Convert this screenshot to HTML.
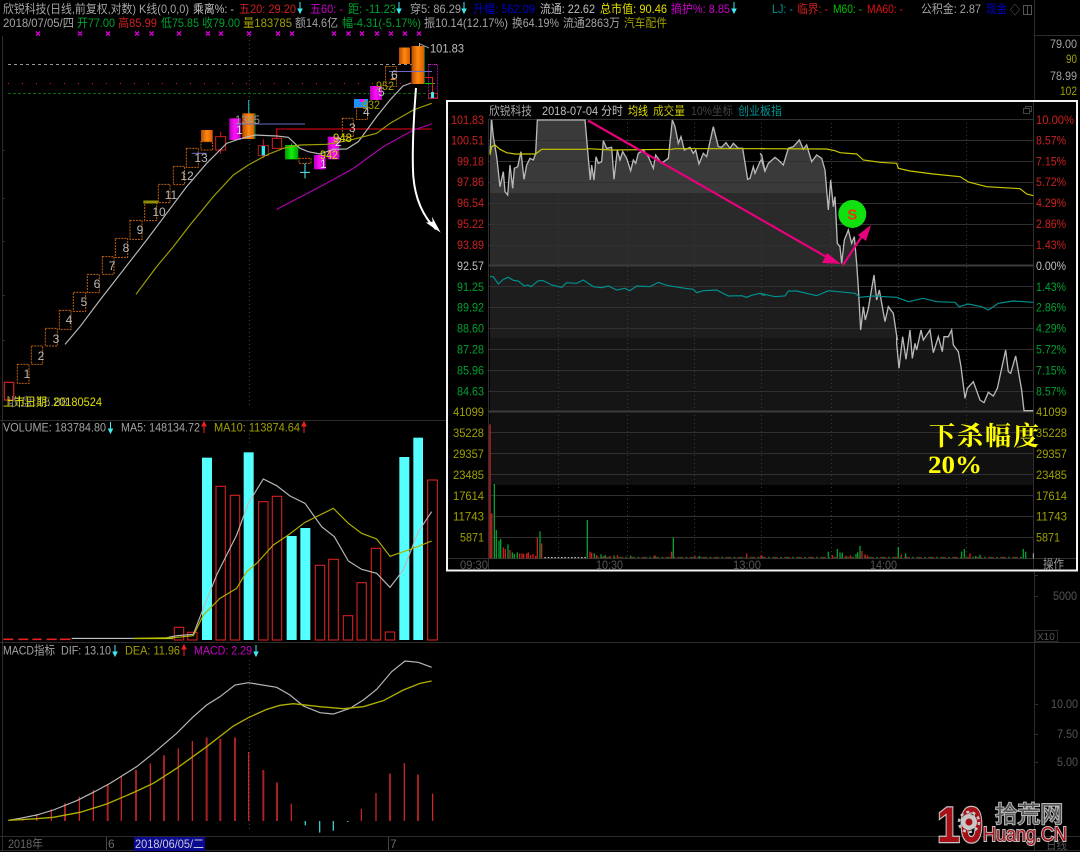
<!DOCTYPE html>
<html lang="zh"><head><meta charset="utf-8"><title>欣锐科技</title>
<style>
html,body{margin:0;padding:0;background:#000;width:1080px;height:852px;overflow:hidden}
svg{display:block;filter:blur(.35px)}
text{font-family:"Liberation Sans","Noto Sans CJK SC",sans-serif;font-size:12px}
.g{fill:#a4a4a4}.w{fill:#c0c0c0}.r{fill:#cc2020}.n{fill:#00a030}.y{fill:#a0a000}.Y{fill:#e0e000}.m{fill:#c800c8}.b{fill:#0000c8}.t{fill:#009494}.d{fill:#555}
.l{fill:none}
</style></head><body>
<svg width="1080" height="852" viewBox="0 0 1080 852" xmlns="http://www.w3.org/2000/svg">
<defs>
<linearGradient id="og"><stop offset="0" stop-color="#b84a00"/><stop offset=".5" stop-color="#ff8a10"/><stop offset="1" stop-color="#d85a00"/></linearGradient>
<linearGradient id="mg"><stop offset="0" stop-color="#b800b8"/><stop offset=".5" stop-color="#ff10ff"/><stop offset="1" stop-color="#c000c0"/></linearGradient>
<linearGradient id="gg"><stop offset="0" stop-color="#009a00"/><stop offset=".5" stop-color="#10f010"/><stop offset="1" stop-color="#00a000"/></linearGradient>
<path id="dn" d="M0 0V10M-2 7L0 11L2 7Z" stroke="#40e8f0" fill="#40e8f0"/>
<path id="up" d="M0 11V1M-2 4L0 0L2 4Z" stroke="#f02020" fill="#f02020"/>
<clipPath id="pc">
<polygon transform="translate(445,100) scale(.33333)" points="135,1155 135,60 140,60 145,110 155,170 165,260 175,215 180,275 188,285 195,195 203,265 208,205 218,200 228,155 237,238 245,195 255,175 265,180 272,160 277,60 420,60 430,175 436,240 440,195 447,240 453,170 460,190 470,185 475,122 485,145 500,142 507,238 517,150 525,180 533,155 545,175 557,212 565,180 572,190 580,160 595,150 610,170 625,205 632,165 650,190 670,175 682,60 690,80 700,130 708,110 718,150 735,142 745,160 752,150 762,192 775,160 785,170 805,80 820,140 830,142 843,128 855,145 865,130 880,145 893,145 908,238 915,235 925,200 930,220 945,185 950,180 960,215 960,1155"/>
<polygon transform="translate(760,100) scale(.33333)" points="0,1155 0,160 5,165 15,213 25,190 45,172 55,180 70,195 85,145 100,140 118,120 130,148 140,135 155,185 170,165 185,175 195,210 205,330 212,240 220,320 225,290 232,430 240,440 245,490 253,420 265,390 275,430 283,410 290,490 296,580 302,690 310,620 316,660 325,625 342,525 350,600 358,570 375,665 385,620 400,640 412,720 412,1155"/>
<polygon transform="translate(760,330) scale(.33333)" points="410,465 410,40 417,115 428,20 438,88 450,0 457,85 465,40 470,60 483,0 490,30 510,0 520,68 535,20 547,65 552,20 565,20 575,0 580,45 595,65 603,110 615,205 622,175 640,155 660,210 672,218 685,187 700,198 712,175 737,60 745,125 752,130 767,78 785,180 792,242 820,242 820,465"/>
</clipPath>
</defs>
<rect width="1080" height="852" fill="#000"/>

<!-- frame lines -->
<g stroke="#2c2c2c" fill="none">
<path d="M2.5 36V850M0 420.5H1034M0 642.5H1080M0 836.5H1080M0 850.5H1080M1034.5 0V850M1034 35.5H1080"/>
<path d="M1034 575.5H1038M1034 596.5H1038M1034 704.5H1038M1034 734.5H1038M1034 762.5H1038M2 150.5H5M2 198.5H5M2 241.5H5M2 295.5H5M2 340.5H5"/>
<rect x="1035.5" y="630.5" width="22" height="11"/>
</g>
<path d="M249.5 36V405M249.5 430V445M249.5 660V830" stroke="#444" stroke-dasharray="1 3" fill="none"/>

<!-- header line 1 -->
<text class="g" x="3" y="13" textLength="133" lengthAdjust="spacingAndGlyphs">欣锐科技(日线,前复权,对数)</text>
<text class="g" x="139" y="13" textLength="50" lengthAdjust="spacingAndGlyphs">K线(0,0,0)</text>
<text class="w" x="193" y="13" textLength="41" lengthAdjust="spacingAndGlyphs">乘离%: -</text>
<text class="r" x="239" y="13" textLength="57" lengthAdjust="spacingAndGlyphs">五20: 29.20</text>
<text class="m" x="310" y="13" textLength="33" lengthAdjust="spacingAndGlyphs">五60: -</text>
<text class="n" x="348" y="13" textLength="48" lengthAdjust="spacingAndGlyphs">距: -11.23</text>
<text class="g" x="410" y="13" textLength="51" lengthAdjust="spacingAndGlyphs">穿5: 86.29</text>
<text class="b" x="473" y="13" textLength="62" lengthAdjust="spacingAndGlyphs">升幅: 562.09</text>
<text class="w" x="540" y="13" textLength="55" lengthAdjust="spacingAndGlyphs">流通: 22.62</text>
<text class="Y" x="600" y="13" textLength="67" lengthAdjust="spacingAndGlyphs">总市值: 90.46</text>
<text class="m" x="671" y="13" textLength="59" lengthAdjust="spacingAndGlyphs">摘护%: 8.85</text>
<text class="t" x="772" y="13" textLength="21" lengthAdjust="spacingAndGlyphs">LJ: -</text>
<text class="r" x="797" y="13" textLength="31" lengthAdjust="spacingAndGlyphs">临界: -</text>
<text x="833" y="13" fill="#00c000" textLength="29" lengthAdjust="spacingAndGlyphs">M60: -</text>
<text x="867" y="13" fill="#e01010" textLength="36" lengthAdjust="spacingAndGlyphs">MA60: -</text>
<text class="g" x="921" y="13" textLength="60" lengthAdjust="spacingAndGlyphs">公积金: 2.87</text>
<text class="b" x="986" y="13" textLength="21" lengthAdjust="spacingAndGlyphs">现金</text>
<text x="1010" y="14" fill="#666" textLength="10" lengthAdjust="spacingAndGlyphs">◇</text>
<rect x="1023.5" y="5.5" width="8" height="9" fill="none" stroke="#555"/><path d="M1027.5 5V15" stroke="#555"/>
<use href="#dn" x="300" y="2"/><use href="#dn" x="399" y="2"/><use href="#dn" x="464" y="2"/><use href="#dn" x="734" y="2"/>

<!-- header line 2 -->
<text class="g" x="3" y="27" textLength="71" lengthAdjust="spacingAndGlyphs">2018/07/05/四</text>
<text class="n" x="77" y="27" textLength="38" lengthAdjust="spacingAndGlyphs">开77.00</text>
<text class="r" x="118" y="27" textLength="39" lengthAdjust="spacingAndGlyphs">高85.99</text>
<text class="n" x="161" y="27" textLength="38" lengthAdjust="spacingAndGlyphs">低75.85</text>
<text class="n" x="202" y="27" textLength="38" lengthAdjust="spacingAndGlyphs">收79.00</text>
<text class="y" x="243" y="27" textLength="49" lengthAdjust="spacingAndGlyphs">量183785</text>
<text class="g" x="295" y="27" textLength="43" lengthAdjust="spacingAndGlyphs">额14.6亿</text>
<text class="n" x="342" y="27" textLength="79" lengthAdjust="spacingAndGlyphs">幅-4.31(-5.17%)</text>
<text class="g" x="424" y="27" textLength="84" lengthAdjust="spacingAndGlyphs">振10.14(12.17%)</text>
<text class="g" x="512" y="27" textLength="47" lengthAdjust="spacingAndGlyphs">换64.19%</text>
<text class="g" x="563" y="27" textLength="57" lengthAdjust="spacingAndGlyphs">流通2863万</text>
<text class="y" x="624" y="27" textLength="43" lengthAdjust="spacingAndGlyphs">汽车配件</text>

<!-- magenta x marks -->
<g stroke="#e000e0" stroke-width="1.3" fill="none">
<path d="M36 31.5l4 4m0-4l-4 4M78 31.5l4 4m0-4l-4 4M106 31.5l4 4m0-4l-4 4M135 31.5l4 4m0-4l-4 4M149.5 31.5l4 4m0-4l-4 4M177 31.5l4 4m0-4l-4 4M206 31.5l4 4m0-4l-4 4M219 31.5l4 4m0-4l-4 4M247 31.5l4 4m0-4l-4 4M276 31.5l4 4m0-4l-4 4M290 31.5l4 4m0-4l-4 4M332 31.5l4 4m0-4l-4 4M346.5 31.5l4 4m0-4l-4 4M360 31.5l4 4m0-4l-4 4M375 31.5l4 4m0-4l-4 4M389 31.5l4 4m0-4l-4 4M403 31.5l4 4m0-4l-4 4M417 31.5l4 4m0-4l-4 4"/>
</g>

<!-- ref lines -->
<path d="M8 64.5H437" stroke="#999" stroke-dasharray="3 3"/>
<path d="M8 83.5H437" stroke="#d02020" stroke-dasharray="1 13"/>
<path d="M8 93.5H437" stroke="#0a6a0a" stroke-dasharray="3 2"/>

<!-- right price labels -->
<text class="g" x="1050" y="48" textLength="27" lengthAdjust="spacingAndGlyphs">79.00</text>
<text class="y" x="1066" y="63" textLength="11" lengthAdjust="spacingAndGlyphs">90</text>
<text class="g" x="1050" y="80" textLength="27" lengthAdjust="spacingAndGlyphs">78.99</text>
<text class="y" x="1060" y="95" textLength="17" lengthAdjust="spacingAndGlyphs">102</text>

<!-- top-right cluster of candles -->
<g fill="none">
<rect x="385.5" y="66.5" width="11" height="20" stroke="#b05a10" stroke-dasharray="2 1"/>
<rect x="428.5" y="64.5" width="9" height="33" stroke="#a000a0" stroke-dasharray="2 1"/>
<rect x="399" y="47.5" width="11" height="16.5" fill="url(#og)"/>
<rect x="411.5" y="46" width="12.5" height="38" fill="url(#og)"/>
<path d="M424.5 46V84" stroke="#0a6a2a"/>
<path d="M419.5 43V47" stroke="#aaa"/><path d="M420 44L429 48" stroke="#999"/>
<path d="M389 71.5H432" stroke="#6a6ac0"/>
<path d="M425 83.5H435" stroke="#00d000"/>
<path d="M432.5 77V93M425 77.5H432" stroke="#e02020"/>
<rect x="428.5" y="93.5" width="9" height="5" stroke="#b02020"/><rect x="431" y="92" width="3" height="6" fill="#40e8f0"/>
<path d="M390 80l3-3 3 3z" fill="#e08040"/>
<rect x="370" y="86" width="12" height="14" fill="url(#mg)"/>
<rect x="354" y="99" width="14" height="9" fill="#1e90ff"/><rect x="360" y="99" width="4" height="3" fill="#f0f"/>
<rect x="356.5" y="107.5" width="11" height="12" stroke="#b05a10" stroke-dasharray="2 1"/>
</g>
<text class="w" x="430" y="52.5" textLength="34" lengthAdjust="spacingAndGlyphs">101.83</text>
<text class="w" x="391" y="79">6</text>
<text class="y" x="376" y="90" textLength="18" lengthAdjust="spacingAndGlyphs">952</text>
<text class="w" x="378" y="96">5</text>
<text class="y" x="362" y="109" textLength="18" lengthAdjust="spacingAndGlyphs">932</text>
<text class="w" x="363" y="116">4</text>

<!-- main k-line chart in zoom space -->
<g transform="translate(0,100) scale(.33333)" fill="none">
<g stroke="#c06010" stroke-width="3" stroke-dasharray="6 3">
<rect x="52" y="793" width="35" height="57"/><rect x="94" y="738" width="34" height="55"/><rect x="136" y="685" width="36" height="53"/><rect x="178" y="631" width="35" height="57"/><rect x="220" y="577" width="37" height="57"/><rect x="262" y="523" width="36" height="55"/><rect x="307" y="470" width="35" height="53"/><rect x="346" y="415" width="37" height="57"/><rect x="390" y="361" width="36" height="57"/><rect x="434" y="307" width="36" height="55"/><rect x="475" y="253" width="35" height="55"/><rect x="520" y="199" width="34" height="55"/><rect x="559" y="145" width="36" height="57"/>
<rect x="603" y="125" width="35" height="25"/><rect x="897" y="175" width="36" height="15"/><rect x="1027" y="55" width="33" height="55"/>
</g>
<rect x="13" y="847" width="28" height="53" stroke="#c02020" stroke-width="4"/>
<path d="M430 306H475" stroke="#909000" stroke-width="9"/>
<path d="M575 160H620" stroke="#6a6ac0" stroke-width="3"/>
<rect x="603" y="90" width="35" height="35" fill="url(#og)"/>
<path d="M662 95V162" stroke="#d02020" stroke-width="3"/><rect x="647" y="110" width="30" height="40" fill="#000" stroke="#d02020" stroke-width="3"/>
<rect x="688" y="55" width="34" height="65" fill="url(#mg)"/>
<path d="M746 0V40" stroke="#109a9a" stroke-width="4"/>
<rect x="727" y="40" width="38" height="77" fill="url(#og)"/><path d="M765 40V117" stroke="#0a6a2a" stroke-width="4"/>
<path d="M705 72H915" stroke="#6a6ac0" stroke-width="3"/>
<path d="M790 118V175" stroke="#d02020" stroke-width="3"/><rect x="775" y="137" width="30" height="30" fill="#000" stroke="#b02020" stroke-width="3"/><rect x="785" y="138" width="10" height="28" fill="#30e8f0"/>
<path d="M830 115V87H1295" stroke="#c00010" stroke-width="4"/><rect x="817" y="115" width="28" height="30" fill="#000" stroke="#e02020" stroke-width="3"/>
<path d="M875 130V140" stroke="#10c010" stroke-width="3"/><rect x="855" y="135" width="40" height="43" fill="url(#gg)"/>
<path d="M900 217H930M915 190V235" stroke="#50f0f0" stroke-width="3"/>
<rect x="942" y="165" width="35" height="43" fill="url(#mg)"/>
<rect x="983" y="110" width="35" height="68" fill="url(#mg)"/>
<polyline stroke="#b8b8b8" stroke-width="3.5" points="195,733 240,680 300,600 370,510 440,420 500,340 560,260 620,190 680,130 715,118 765,105 830,108 865,112 900,145 925,155 960,162 1000,148 1040,147 1075,125 1130,50 1170,0 1209,-42 1233,-51"/>
<polyline stroke="#a0a000" stroke-width="3.5" points="408,583 470,500 520,440 570,375 640,290 700,225 745,195 800,165 850,145 900,135 980,133 1010,128 1060,118 1130,100 1170,70 1240,30 1295,10"/>
<polyline stroke="#b000b0" stroke-width="3.5" points="830,328 970,255 1060,205 1150,140 1240,90 1295,72"/>
<path d="M1248 -36C1240 60 1236 170 1240 230C1245 290 1265 345 1308 388" stroke="#fff" stroke-width="6"/>
<path d="M1322 398L1278 368L1298 365L1296 350Z" fill="#fff"/>
</g>
<g fill="#b8b8b8" text-anchor="middle">
<text x="27" y="378">1</text>
<text x="41" y="360">2</text>
<text x="56" y="343">3</text>
<text x="69" y="324">4</text>
<text x="84" y="306">5</text>
<text x="97" y="288">6</text>
<text x="112" y="270">7</text>
<text x="126" y="252">8</text>
<text x="140" y="234">9</text>
<text x="159" y="216">10</text>
<text x="171" y="199">11</text>
<text x="187" y="180">12</text>
<text x="201" y="162">13</text>
</g>
<text fill="#999" x="235" y="124" textLength="25" lengthAdjust="spacingAndGlyphs">1345</text>
<text fill="#ddd" x="236" y="134">1</text>
<text fill="#ddd" x="320" y="168">1</text>
<text fill="#ddd" x="335" y="146">2</text>
<text fill="#d8d800" x="320" y="159" textLength="18" lengthAdjust="spacingAndGlyphs">942</text>
<text fill="#d8d800" x="333" y="142" textLength="19" lengthAdjust="spacingAndGlyphs">948</text>
<text fill="#bbb" x="349" y="132">3</text>
<text fill="#777" x="8" y="406" textLength="60" lengthAdjust="spacingAndGlyphs">收盘:15.88</text>
<text class="Y" x="3" y="406" textLength="99" lengthAdjust="spacingAndGlyphs">上市日期: 20180524</text>

<!-- volume panel -->
<text class="g" x="3" y="431.5" textLength="103" lengthAdjust="spacingAndGlyphs">VOLUME: 183784.80</text>
<use href="#dn" x="110.5" y="422"/>
<text class="g" x="121" y="431.5" textLength="79" lengthAdjust="spacingAndGlyphs">MA5: 148134.72</text>
<use href="#up" x="204" y="422"/>
<text class="y" x="214" y="431.5" textLength="86" lengthAdjust="spacingAndGlyphs">MA10: 113874.64</text>
<use href="#up" x="304" y="422"/>
<g transform="translate(0,415) scale(.33333)" fill="none">
<g fill="#55ffff">
<rect x="606" y="128" width="30" height="547"/><rect x="731" y="112" width="30" height="563"/><rect x="860" y="363" width="30" height="312"/><rect x="901" y="339" width="30" height="336"/><rect x="1198" y="126" width="30" height="549"/><rect x="1240" y="68" width="29" height="607"/>
</g>
<g stroke="#c82020" stroke-width="3.5">
<rect x="648" y="214" width="28" height="461"/><rect x="691" y="241" width="28" height="434"/><rect x="776" y="260" width="28" height="415"/><rect x="817" y="244" width="28" height="431"/><rect x="946" y="451" width="28" height="224"/><rect x="986" y="433" width="29" height="242"/><rect x="1030" y="602" width="28" height="73"/><rect x="1071" y="503" width="28" height="172"/><rect x="1114" y="400" width="28" height="275"/><rect x="1156" y="651" width="28" height="24"/><rect x="1283" y="195" width="29" height="480"/><rect x="523" y="637" width="28" height="38"/><rect x="563" y="652" width="28" height="23"/>
</g>
<path d="M10 673H40M55 673H85M97 673H125M140 673H170M180 673H212" stroke="#e82020" stroke-width="5"/>
<path d="M215 670H500" stroke="#ddd" stroke-width="3"/>
<path d="M400 671H520" stroke="#d8d800" stroke-width="3"/>
<polyline stroke="#b8b8b8" stroke-width="3.5" points="500,668 530,662 580,658 610,580 650,480 710,360 745,265 790,192 830,212 870,243 915,265 965,335 1003,365 1045,438 1085,463 1130,475 1170,517 1210,465 1255,350 1295,290"/>
<polyline stroke="#b0b000" stroke-width="3.5" points="400,670 520,668 580,662 610,600 660,550 710,520 740,470 770,445 820,390 865,360 915,322 1000,280 1045,325 1085,355 1130,372 1170,424 1240,400 1295,378"/>
</g>

<!-- MACD panel -->
<text class="g" x="3" y="654.5" textLength="52" lengthAdjust="spacingAndGlyphs">MACD指标</text>
<text class="g" x="61" y="654.5" textLength="50" lengthAdjust="spacingAndGlyphs">DIF: 13.10</text>
<use href="#dn" x="115" y="645"/>
<text class="y" x="125" y="654.5" textLength="55" lengthAdjust="spacingAndGlyphs">DEA: 11.96</text>
<use href="#up" x="184" y="645"/>
<text class="m" x="194" y="654.5" textLength="58" lengthAdjust="spacingAndGlyphs">MACD: 2.29</text>
<use href="#dn" x="256" y="645"/>
<g transform="translate(0,640) scale(.33333)" fill="none">
<g stroke="#e02828" stroke-width="3.5">
<path d="M68 543V538M110 543V522M154 543V508M238 543V470M280 543V450M451 543V370M577 543V303M746 543V336M874 543V491M1084 543V507M1128 543V459M1213 543V369M1298 543V461"/>
</g>
<g stroke="#a82020" stroke-width="6">
<path d="M195 543V490M323 543V433M408 543V390M492 543V346M620 543V292M661 543V297M705 543V292M790 543V390M831 543V428M1170 543V401M1254 543V404"/>
</g>
<path d="M364 543V408M535 543V325" stroke="#c02424" stroke-width="4"/>
<path d="M916 543V556M959 543V578M1000 543V572M1043 543V546" stroke="#38c8d0" stroke-width="4"/>
<polyline stroke="#b8b8b8" stroke-width="3.5" points="25,541 60,535 110,525 160,510 230,482 280,457 330,430 410,380 460,340 530,280 580,230 620,195 660,170 705,135 745,128 830,142 870,165 910,198 960,218 1000,222 1050,205 1090,180 1130,148 1175,95 1215,63 1255,67 1295,82"/>
<polyline stroke="#b0b000" stroke-width="4" points="25,541 110,536 160,532 240,517 320,492 400,458 460,430 530,385 620,320 700,258 745,233 800,208 840,196 880,191 960,200 1030,206 1090,200 1150,182 1210,150 1260,130 1295,123"/>
</g>

<!-- bottom axis -->
<path d="M106.5 837V850M388.5 837V850" stroke="#444"/>
<rect x="134" y="837" width="71" height="14" fill="#0a0a90"/>
<text x="8" y="848" fill="#666" textLength="35" lengthAdjust="spacingAndGlyphs">2018年</text>
<text x="108" y="848" fill="#666">6</text>
<text x="135" y="848" fill="#c8c8d8" textLength="69" lengthAdjust="spacingAndGlyphs">2018/06/05/二</text>
<text x="390" y="848" fill="#666">7</text>

<!-- right axis lower -->
<text class="d" x="1053" y="600" textLength="24" lengthAdjust="spacingAndGlyphs">5000</text>
<text class="d" x="1037" y="640" style="font-size:10px">X10</text>
<text class="d" x="1051" y="708" textLength="27" lengthAdjust="spacingAndGlyphs">10.00</text>
<text class="d" x="1057" y="738" textLength="21" lengthAdjust="spacingAndGlyphs">7.50</text>
<text class="d" x="1057" y="766" textLength="21" lengthAdjust="spacingAndGlyphs">5.00</text>
<text class="d" x="1046" y="849" textLength="21" lengthAdjust="spacingAndGlyphs">日线</text>

<!-- INSET PANEL -->
<rect x="447" y="101" width="630" height="469.5" fill="#000" stroke="#f4f4f4" stroke-width="2"/>
<g clip-path="url(#pc)">
<rect x="489" y="119" width="544" height="74" fill="#3a3a3a"/>
<rect x="489" y="193" width="544" height="72" fill="#2a2a2a"/>
<rect x="489" y="265" width="544" height="73" fill="#1d1d1d"/>
<rect x="489" y="338" width="544" height="73" fill="#151515"/>
<rect x="489" y="411" width="544" height="74" fill="#101010"/>
</g>
<g stroke="#303030" fill="none">
<path d="M489 119.5H1033M489 140.5H1033M489 161.5H1033M489 182.5H1033M489 203.5H1033M489 224.5H1033M489 245.5H1033M489 286.5H1033M489 307.5H1033M489 328.5H1033M489 349.5H1033M489 370.5H1033M489 391.5H1033M489 432.5H1033M489 453.5H1033M489 474.5H1033M489 495.5H1033M489 516.5H1033M489 537.5H1033"/>
<path d="M489 265.5H1033M489 411.5H1033" stroke="#3c3c3c" stroke-width="2"/>
<path d="M448 558.5H1076M1033.5 102V569M488.5 119V569"/>
</g>
<path d="M558.5 119V558M627.5 119V558M694.5 119V558M761.5 119V558M831.5 119V558M898.5 119V558M966.5 119V558" stroke="#3a3a3a" stroke-dasharray="1 3" fill="none"/>

<!-- inset volume bars -->
<g transform="translate(445,330) scale(.33333)" fill="none">
<path d="M135 685V283M140 685V550" stroke="#a82020" stroke-width="5"/>
<path d="M148 685V462M154 685V600M162 685V632M167 685V627M189 685V643M202 685V667M208 685V672M217 685V667M285 685V604M427 685V570M448 685V670M468 685V673M481 685V675M507 685V676M557 685V677M627 685V678M685 685V623M764 685V678" stroke="#00a030" stroke-width="4"/>
<path d="M175 685V652M181 685V657M195 685V660M224 685V670M231 685V670M236 685V672M245 685V670M250 685V667M257 685V675M264 685V672M272 685V678M277 685V622M290 685V640M435 685V665M440 685V668M455 685V675M476 685V678M495 685V678M517 685V675M680 685V665M630 685V676M750 685V678M905 685V670M950 685V676" stroke="#c82020" stroke-width="4"/>
<path d="M298 683H425" stroke="#ccc" stroke-width="3" stroke-dasharray="5 5"/>
<path d="M445 682H960" stroke="#a02020" stroke-width="3" stroke-dasharray="6 6"/>
<path d="M451 682H960" stroke="#0a7a2a" stroke-width="3" stroke-dasharray="6 12"/>
</g>
<g transform="translate(760,330) scale(.33333)" fill="none">
<path d="M205 685V665M232 685V657M240 685V667M247 685V668M288 685V672M293 685V667M300 685V648M415 685V651M437 685V670M605 685V665M613 685V657M647 685V678M660 685V674M790 685V657M797 685V665" stroke="#00a030" stroke-width="4"/>
<path d="M217 685V675M258 685V677M272 685V676M306 685V663M315 685V673M322 685V676M424 685V673M630 685V670M3 685V677" stroke="#c82020" stroke-width="4"/>
<path d="M820 685V670" stroke="#bbb" stroke-width="3"/>
<path d="M0 682H790" stroke="#a02020" stroke-width="3" stroke-dasharray="6 6"/>
<path d="M6 682H790" stroke="#0a7a2a" stroke-width="3" stroke-dasharray="6 12"/>
</g>

<!-- inset lines -->
<g transform="translate(445,100) scale(.33333)" fill="none">
<polyline stroke="#b8b8b8" stroke-width="4" points="135,160 140,60 145,110 155,170 165,260 175,215 180,275 188,285 195,195 203,265 208,205 218,200 228,155 237,238 245,195 255,175 265,180 272,160 277,60 420,60 430,175 436,240 440,195 447,240 453,170 460,190 470,185 475,122 485,145 500,142 507,238 517,150 525,180 533,155 545,175 557,212 565,180 572,190 580,160 595,150 610,170 625,205 632,165 650,190 670,175 682,60 690,80 700,130 708,110 718,150 735,142 745,160 752,150 762,192 775,160 785,170 805,80 820,140 830,142 843,128 855,145 865,130 880,145 893,145 908,238 915,235 925,200 930,220 945,185 950,180 960,215"/>
<polyline stroke="#c8c800" stroke-width="3.5" points="135,165 140,140 150,135 165,148 185,158 210,162 272,162 290,148 420,148 430,146 500,150 680,148 690,146 960,146"/>
<polyline stroke="#009090" stroke-width="3.5" points="135,530 145,530 160,552 175,538 190,532 205,541 220,543 238,558 248,555 258,560 280,542 295,542 320,555 350,562 365,548 395,550 415,540 445,560 470,563 490,558 515,570 540,565 555,572 575,558 615,560 640,547 665,556 720,565 745,568 755,578 775,572 815,570 850,588 890,587 905,592 920,586 945,580 960,587"/>
</g>
<g transform="translate(760,100) scale(.33333)" fill="none">
<polyline stroke="#b8b8b8" stroke-width="4" points="0,160 5,165 15,213 25,190 45,172 55,180 70,195 85,145 100,140 118,120 130,148 140,135 155,185 170,165 185,175 195,210 205,330 212,240 220,320 225,290 232,430 240,440 245,490 253,420 265,390 275,430 283,410 290,490 296,580 302,690 310,620 316,660 325,625 342,525 350,600 358,570 375,665 385,620 400,640 412,720"/>
<polyline stroke="#c8c800" stroke-width="3.5" points="0,146 200,147 225,152 240,158 290,162 310,180 360,187 410,190 415,205 450,213 520,222 600,230 625,246 680,260 780,266 800,282 820,287"/>
<polyline stroke="#009090" stroke-width="3.5" points="0,580 45,590 75,588 85,573 110,573 170,587 205,572 285,580 300,592 340,588 410,592 445,605 490,595 530,605 585,607 597,620 625,612 665,620 685,630 715,610 760,603 820,607"/>
</g>
<g transform="translate(760,330) scale(.33333)" fill="none">
<polyline stroke="#b8b8b8" stroke-width="4" points="410,20 410,40 417,115 428,20 438,88 450,0 457,85 465,40 470,60 483,0 490,30 510,0 520,68 535,20 547,65 552,20 565,20 575,0 580,45 595,65 603,110 615,205 622,175 640,155 660,210 672,218 685,187 700,198 712,175 737,60 745,125 752,130 767,78 785,180 792,242 820,242"/>
</g>

<!-- pink arrows -->
<path d="M588 120.5L830 259" stroke="#e8007c" stroke-width="2.2" fill="none"/>
<polygon points="841,264 822,263 827,253" fill="#e8007c"/>
<path d="M843 265L864 233" stroke="#e8007c" stroke-width="2.2" fill="none"/>
<polygon points="871,225 866,241 858,235" fill="#e8007c"/>

<!-- S marker -->
<circle cx="852.3" cy="214" r="14" fill="#10e010"/>
<text x="852.3" y="219.5" text-anchor="middle" fill="#f03010" style="font-size:15px;font-weight:bold">S</text>

<!-- inset header -->
<text class="g" x="489" y="115" textLength="43" lengthAdjust="spacingAndGlyphs">欣锐科技</text>
<text class="w" x="542" y="115" textLength="81" lengthAdjust="spacingAndGlyphs">2018-07-04 分时</text>
<text class="Y" x="628" y="115" textLength="20" lengthAdjust="spacingAndGlyphs">均线</text>
<text fill="#c0c000" x="653" y="115" textLength="32" lengthAdjust="spacingAndGlyphs">成交量</text>
<text x="691" y="115" fill="#444" textLength="42" lengthAdjust="spacingAndGlyphs">10%坐标</text>
<text class="t" x="738" y="115" textLength="44" lengthAdjust="spacingAndGlyphs">创业板指</text>
<rect x="1023.5" y="108.5" width="6" height="5" fill="none" stroke="#444"/><path d="M1025.5 108V106.5H1031.5V111.5H1030" stroke="#444" fill="none"/>

<!-- inset left axis -->
<text class="r" x="451" y="124" textLength="33" lengthAdjust="spacingAndGlyphs">101.83</text>
<text class="r" x="451" y="144.5" textLength="33" lengthAdjust="spacingAndGlyphs">100.51</text>
<text class="r" x="457" y="165.5" textLength="27" lengthAdjust="spacingAndGlyphs">99.18</text>
<text class="r" x="457" y="186" textLength="27" lengthAdjust="spacingAndGlyphs">97.86</text>
<text class="r" x="457" y="207" textLength="27" lengthAdjust="spacingAndGlyphs">96.54</text>
<text class="r" x="457" y="228" textLength="27" lengthAdjust="spacingAndGlyphs">95.22</text>
<text class="r" x="457" y="249" textLength="27" lengthAdjust="spacingAndGlyphs">93.89</text>
<text class="w" x="457" y="270" textLength="27" lengthAdjust="spacingAndGlyphs">92.57</text>
<text class="n" x="457" y="291" textLength="27" lengthAdjust="spacingAndGlyphs">91.25</text>
<text class="n" x="457" y="311.5" textLength="27" lengthAdjust="spacingAndGlyphs">89.92</text>
<text class="n" x="457" y="332.5" textLength="27" lengthAdjust="spacingAndGlyphs">88.60</text>
<text class="n" x="457" y="353.5" textLength="27" lengthAdjust="spacingAndGlyphs">87.28</text>
<text class="n" x="457" y="374.5" textLength="27" lengthAdjust="spacingAndGlyphs">85.96</text>
<text class="n" x="457" y="395.5" textLength="27" lengthAdjust="spacingAndGlyphs">84.63</text>
<text class="y" x="453" y="416" textLength="31" lengthAdjust="spacingAndGlyphs">41099</text>
<text class="y" x="453" y="437" textLength="31" lengthAdjust="spacingAndGlyphs">35228</text>
<text class="y" x="453" y="458" textLength="31" lengthAdjust="spacingAndGlyphs">29357</text>
<text class="y" x="453" y="479" textLength="31" lengthAdjust="spacingAndGlyphs">23485</text>
<text class="y" x="453" y="500" textLength="31" lengthAdjust="spacingAndGlyphs">17614</text>
<text class="y" x="453" y="520.5" textLength="31" lengthAdjust="spacingAndGlyphs">11743</text>
<text class="y" x="460" y="541.5" textLength="24" lengthAdjust="spacingAndGlyphs">5871</text>
<!-- inset right axis -->
<text class="r" x="1036" y="124" textLength="38" lengthAdjust="spacingAndGlyphs">10.00%</text>
<text class="r" x="1036" y="144.5" textLength="30" lengthAdjust="spacingAndGlyphs">8.57%</text>
<text class="r" x="1036" y="165.5" textLength="30" lengthAdjust="spacingAndGlyphs">7.15%</text>
<text class="r" x="1036" y="186" textLength="30" lengthAdjust="spacingAndGlyphs">5.72%</text>
<text class="r" x="1036" y="207" textLength="30" lengthAdjust="spacingAndGlyphs">4.29%</text>
<text class="r" x="1036" y="228" textLength="30" lengthAdjust="spacingAndGlyphs">2.86%</text>
<text class="r" x="1036" y="249" textLength="30" lengthAdjust="spacingAndGlyphs">1.43%</text>
<text class="w" x="1036" y="270" textLength="30" lengthAdjust="spacingAndGlyphs">0.00%</text>
<text class="n" x="1036" y="291" textLength="30" lengthAdjust="spacingAndGlyphs">1.43%</text>
<text class="n" x="1036" y="311.5" textLength="30" lengthAdjust="spacingAndGlyphs">2.86%</text>
<text class="n" x="1036" y="332.5" textLength="30" lengthAdjust="spacingAndGlyphs">4.29%</text>
<text class="n" x="1036" y="353.5" textLength="30" lengthAdjust="spacingAndGlyphs">5.72%</text>
<text class="n" x="1036" y="374.5" textLength="30" lengthAdjust="spacingAndGlyphs">7.15%</text>
<text class="n" x="1036" y="395.5" textLength="30" lengthAdjust="spacingAndGlyphs">8.57%</text>
<text class="y" x="1036" y="416" textLength="31" lengthAdjust="spacingAndGlyphs">41099</text>
<text class="y" x="1036" y="437" textLength="31" lengthAdjust="spacingAndGlyphs">35228</text>
<text class="y" x="1036" y="458" textLength="31" lengthAdjust="spacingAndGlyphs">29357</text>
<text class="y" x="1036" y="479" textLength="31" lengthAdjust="spacingAndGlyphs">23485</text>
<text class="y" x="1036" y="500" textLength="31" lengthAdjust="spacingAndGlyphs">17614</text>
<text class="y" x="1036" y="520.5" textLength="31" lengthAdjust="spacingAndGlyphs">11743</text>
<text class="y" x="1036" y="541.5" textLength="24" lengthAdjust="spacingAndGlyphs">5871</text>
<!-- inset time axis -->
<text x="460" y="569" fill="#555" textLength="28" lengthAdjust="spacingAndGlyphs">09:30</text>
<text x="596" y="569" fill="#555" textLength="27" lengthAdjust="spacingAndGlyphs">10:30</text>
<text x="733" y="569" fill="#555" textLength="28" lengthAdjust="spacingAndGlyphs">13:00</text>
<text x="870" y="569" fill="#555" textLength="27" lengthAdjust="spacingAndGlyphs">14:00</text>
<text x="1043" y="568" fill="#999" textLength="21" lengthAdjust="spacingAndGlyphs">操作</text>

<!-- annotation -->
<text x="929" y="445" fill="#ffff00" textLength="110" lengthAdjust="spacing" style="font-family:'Liberation Serif','Noto Serif CJK SC',serif;font-size:26px;font-weight:bold">下杀幅度</text>
<text x="928" y="473" fill="#ffff00" textLength="54" lengthAdjust="spacingAndGlyphs" style="font-family:'Liberation Serif',serif;font-size:25px;font-weight:bold">20%</text>

<!-- logo -->
<text x="995" y="822" fill="#555" stroke="#b8b8b8" stroke-width="2" paint-order="stroke" textLength="68" lengthAdjust="spacingAndGlyphs" style="font-size:23px">拾荒网</text>
<text x="937" y="842" fill="#a81018" stroke="#c4c4c4" stroke-width="2.5" paint-order="stroke" textLength="46" lengthAdjust="spacingAndGlyphs" style="font-size:50px;font-weight:bold">10</text>
<circle cx="969" cy="822" r="8" fill="#c8c8c8"/>
<circle cx="969" cy="822" r="10" fill="none" stroke="#c8c8c8" stroke-width="2.5" stroke-dasharray="3 3.3"/>
<circle cx="969" cy="822" r="3.5" fill="#a81018"/>
<text x="983" y="841" fill="#a81018" stroke="#c4c4c4" stroke-width="2" paint-order="stroke" textLength="84" lengthAdjust="spacingAndGlyphs" style="font-size:20px">Huang.CN</text>
</svg>
</body></html>
